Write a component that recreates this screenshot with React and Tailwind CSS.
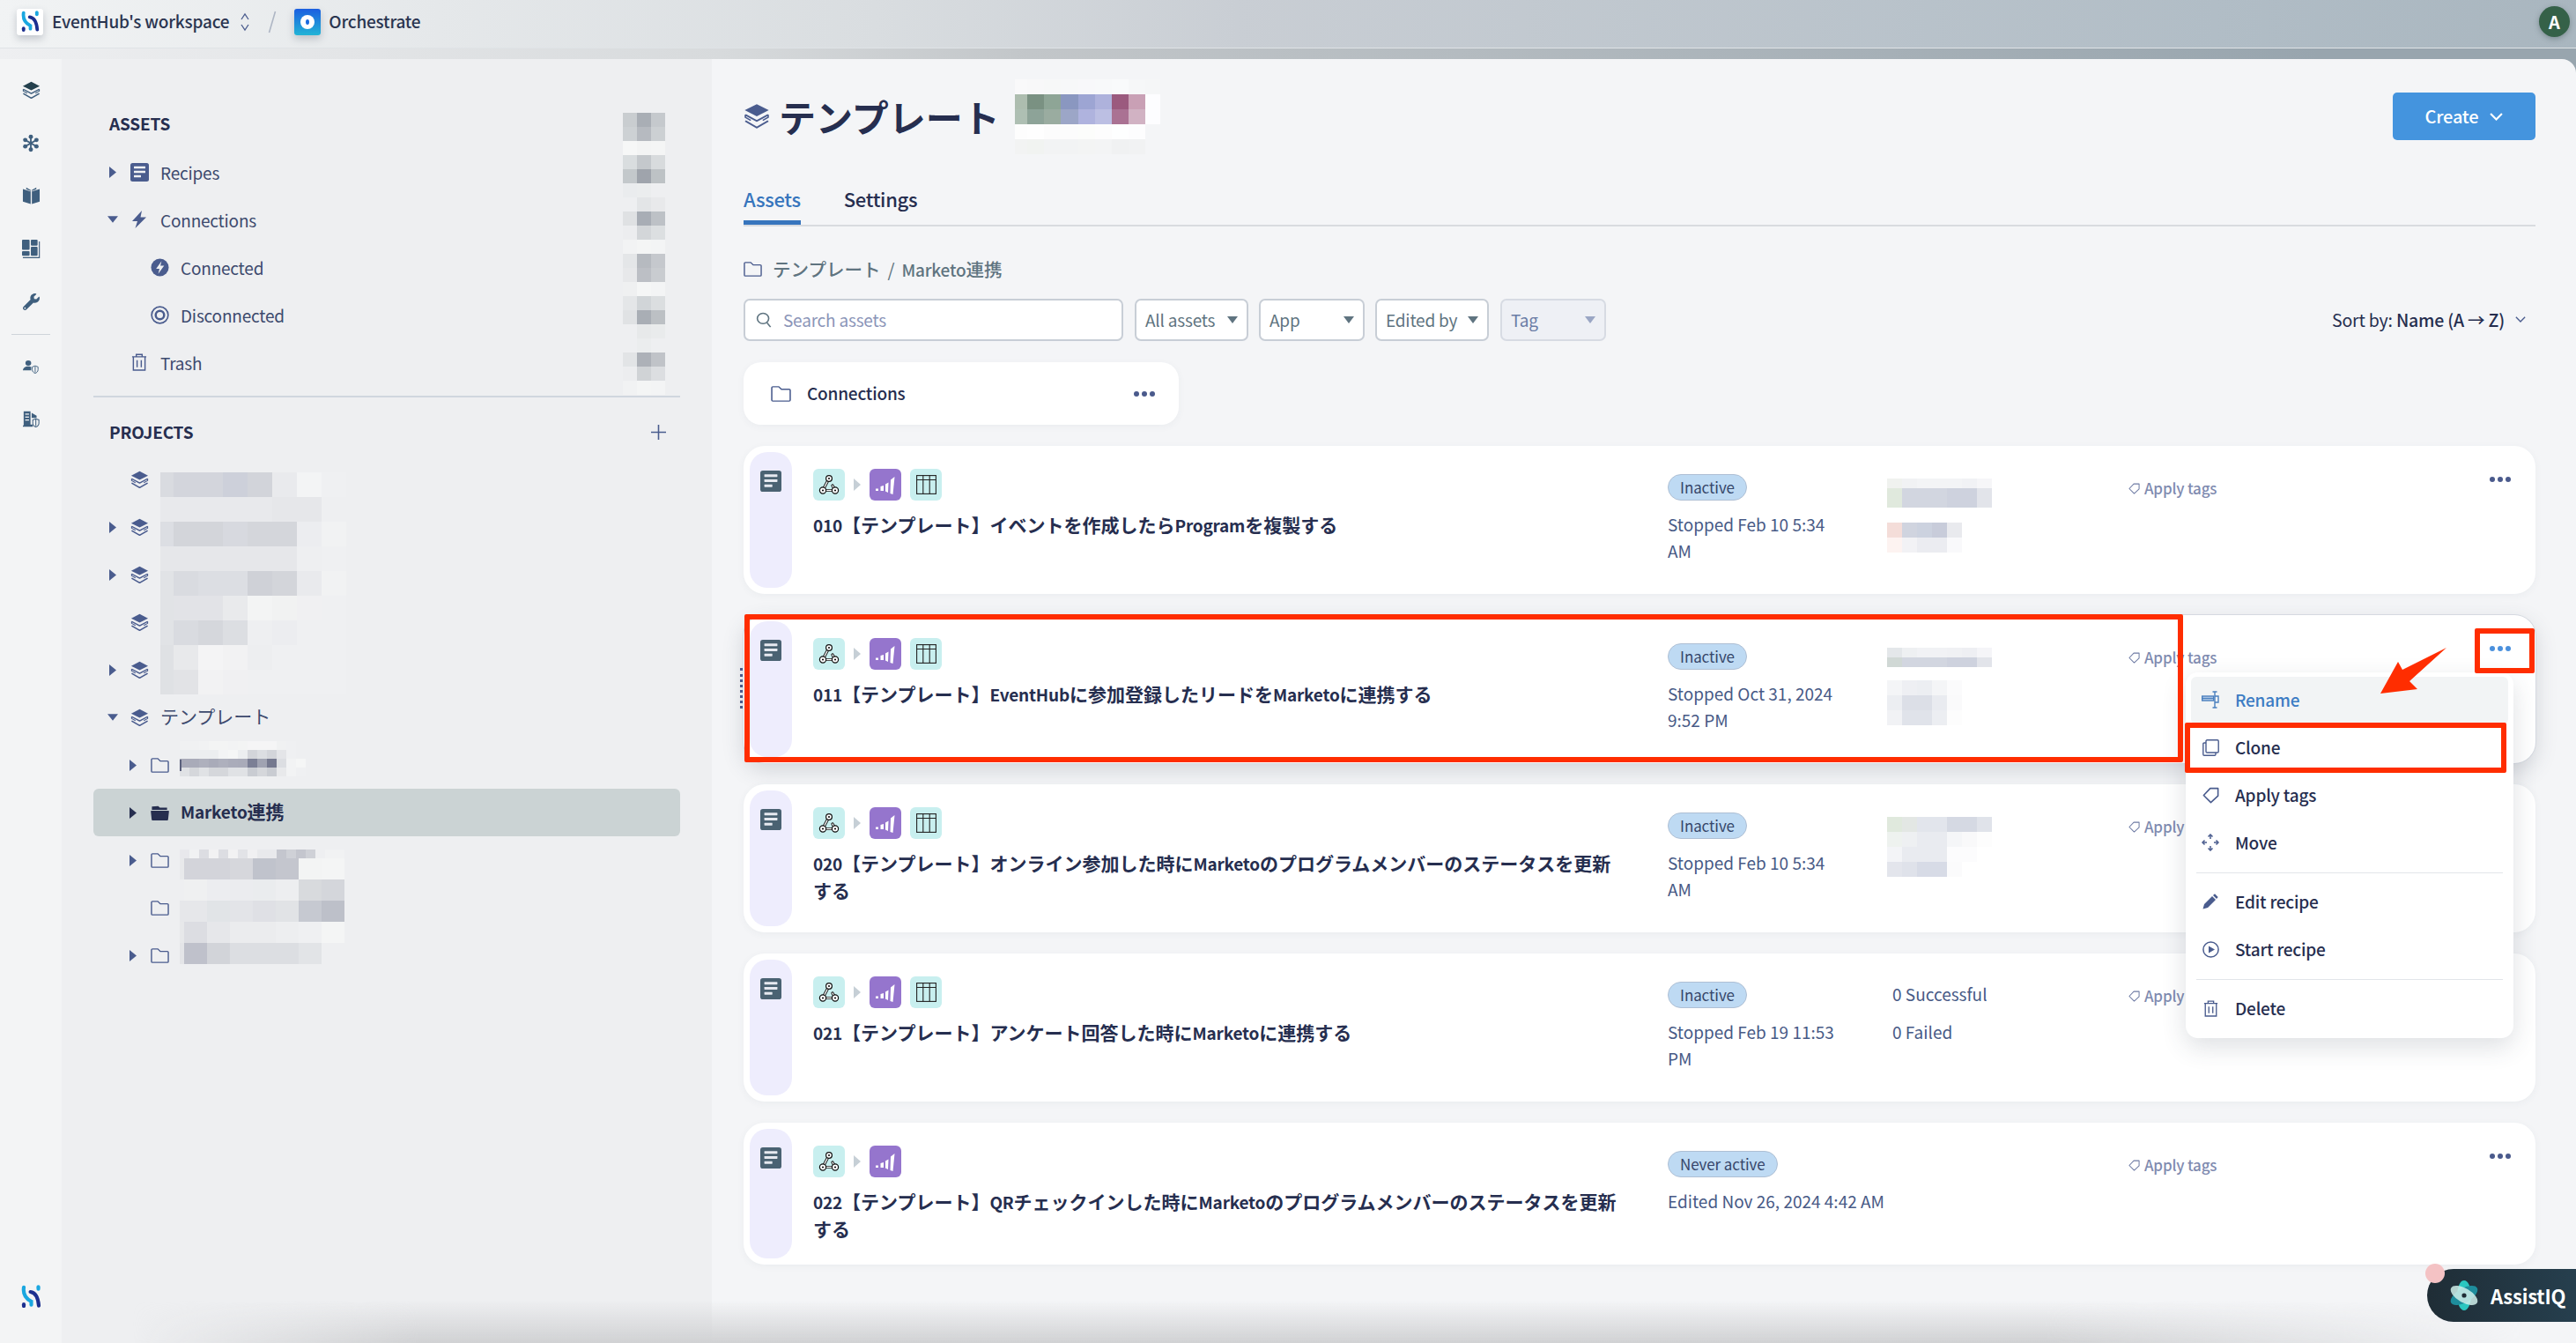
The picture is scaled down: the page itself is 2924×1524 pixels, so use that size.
import React from "react";
import { FaWrench } from "react-icons/fa";

const NAVY = "#4a5c8e";

function Mosaic({ rows, tw, th, xs, className }) {
  const cols = xs || Array.from({ length: Math.max(...rows.map((r) => r.length)) + 1 }, (_, i) => i * tw);
  const w = cols[cols.length - 1];
  const h = rows.length * th;
  return (
    <svg width={w} height={h} className={className} shapeRendering="crispEdges" aria-hidden="true">
      {rows.map((r, y) =>
        r.map((c, x) => (
          <rect key={x + "-" + y} x={cols[x]} y={y * th} width={cols[x + 1] - cols[x]} height={th} fill={c} />
        ))
      )}
    </svg>
  );
}

function Mixed({ text, latin = "text-[19px] tracking-[-0.2px]" }) {
  const parts = text.split(/([A-Za-z0-9]+|する$)/);
  return (
    <>
      {parts.map((p, i) =>
        /^[A-Za-z0-9]+$/.test(p) ? (
          <span key={i} className={latin}>{p}</span>
        ) : p === "する" ? (
          <span key={i}>{p}</span>
        ) : (
          <React.Fragment key={i}>{p}</React.Fragment>
        )
      )}
    </>
  );
}

function Stack({ size = 21, color = NAVY, topColor }) {
  return (
    <svg width={size} height={size} viewBox="0 0 22 26" preserveAspectRatio="none" fill="none">
      <path d="M11 1 21 7 11 13 1 7Z" fill={topColor || color} />
      <path d="M1.5 11.5 11 17.5 20.5 11.5" stroke={color} strokeWidth="1.6" strokeLinejoin="round" />
      <path d="M1.5 17.5 11 24 20.5 17.5" stroke={color} strokeWidth="1.6" strokeLinejoin="round" />
      <path d="M1.5 11.5V14L6 17M20.5 11.5V14L16 17" stroke={color} strokeWidth="1.2" />
    </svg>
  );
}
function Snow() {
  const c = "#3f5f7e";
  const pts = [[11, 3], [11, 19], [4, 7], [18, 7], [4, 15], [18, 15]];
  return (
    <svg width="20" height="21" viewBox="0 0 22 22">
      {pts.map((p, i) => (
        <g key={i}>
          <line x1="11" y1="11" x2={p[0]} y2={p[1]} stroke={c} strokeWidth="2" />
          <circle cx={p[0]} cy={p[1]} r="2.7" fill={c} />
        </g>
      ))}
      <circle cx="11" cy="11" r="2.2" fill={c} />
    </svg>
  );
}
function Book() {
  return (
    <svg width="21" height="20" viewBox="0 0 22 21" fill="#3f5f7e">
      <path d="M1 2.5 10.3 5.5V20.5L1 17.5Z" />
      <path d="M21 2.5 11.7 5.5V20.5L21 17.5Z" />
      <path d="M5 .8 10.5 4 10.5 5 5 2.8ZM17 .8 11.5 4V5L17 2.8Z" />
    </svg>
  );
}
function Dash() {
  return (
    <svg width="21" height="21" viewBox="0 0 22 22" fill="#3f5f7e">
      <rect x="0" y="0" width="9" height="12" rx="1" />
      <rect x="10.5" y="0" width="8" height="7" rx="1" />
      <rect x="10.5" y="8.5" width="8" height="10.5" rx="1" />
      <rect x="0" y="13.5" width="9" height="5.5" rx="1" />
      <path d="M20 2h1.2v20H1v-1.3h19Z" />
    </svg>
  );
}
function UserShield() {
  return (
    <svg width="18" height="16" viewBox="0 0 22 22" preserveAspectRatio="none" fill="none">
      <circle cx="7.5" cy="5.5" r="4" fill="#3f5f7e" />
      <path d="M0 17c0-4 3-6.5 7.5-6.5 2 0 3 .4 4 1V17Z" fill="#3f5f7e" />
      <path d="M13 11.5 17 9.8l4 1.7V16c0 2.8-2 4.6-4 5.4-2-.8-4-2.6-4-5.4Z" stroke="#3f5f7e" strokeWidth="1.2" />
      <path d="M17 11v9" stroke="#3f5f7e" strokeWidth="1.2" />
    </svg>
  );
}
function BuildingShield() {
  return (
    <svg width="19" height="20" viewBox="0 0 22 24" preserveAspectRatio="none" fill="none">
      <path d="M1 1h9v18h3v3H0v-2h1Z" fill="#3f5f7e" />
      <rect x="3" y="4" width="5" height="1.5" fill="#f3f4f5" />
      <rect x="3" y="8" width="5" height="1.5" fill="#f3f4f5" />
      <rect x="3" y="12" width="5" height="1.5" fill="#f3f4f5" />
      <path d="M11.5 3 18 7v3h-6.5Z" fill="#3f5f7e" />
      <path d="M13 12.5 17 11l4 1.5V17c0 2.7-2 4.4-4 5.2-2-.8-4-2.5-4-5.2Z" fill="#f3f4f5" stroke="#3f5f7e" strokeWidth="1.2" />
      <path d="M17 12v9" stroke="#3f5f7e" strokeWidth="1.2" />
    </svg>
  );
}
function SmallS({ w = 22 }) {
  return (
    <svg width={w} height={w * 1.15} viewBox="0 0 24 28" fill="none" strokeLinecap="round">
      <path d="M3 3C2 10 4 16 12 20V24" stroke="#1aa7e0" strokeWidth="4.4" />
      <path d="M20.5 2.5V5" stroke="#1aa7e0" strokeWidth="4.4" />
      <path d="M11 8.5C15 9 20 13 21 25" stroke="#1c2f8f" strokeWidth="4.4" />
      <path d="M3 23.5V25.5" stroke="#1c2f8f" strokeWidth="4.4" />
    </svg>
  );
}
function RecipeIcon({ color = NAVY, line = "#f0f1f4", s = 21 }) {
  return (
    <svg width={s} height={s} viewBox="0 0 21 21">
      <rect x="0" y="0" width="21" height="21" rx="2.5" fill={color} />
      <rect x="4" y="3.7" width="13" height="2.6" rx="0.4" fill={line} />
      <rect x="4" y="8.7" width="13" height="2.6" rx="0.4" fill={line} />
      <rect x="4" y="13.7" width="8" height="2.6" rx="0.4" fill={line} />
    </svg>
  );
}
function BoltIcon() {
  return (
    <svg width="16" height="22" viewBox="0 0 16 20" fill={NAVY}>
      <path d="M11 0 0 12h6L3.5 20 16 7.5H9.5Z" />
    </svg>
  );
}
function ConnectedIcon() {
  return (
    <svg width="21" height="21" viewBox="0 0 22 22">
      <circle cx="11" cy="11" r="10.5" fill={NAVY} />
      <path d="M13 3.5 6.5 12.5h4L9 18.5l7-9.5h-4.4Z" fill="#eeeff1" />
    </svg>
  );
}
function DisconnectedIcon() {
  return (
    <svg width="21" height="21" viewBox="0 0 22 22" fill="none" stroke={NAVY}>
      <circle cx="11" cy="11" r="9.8" strokeWidth="1.8" />
      <circle cx="11" cy="11" r="5" strokeWidth="2.6" />
    </svg>
  );
}
function TrashIcon({ color = NAVY, w = 18, h = 20 }) {
  return (
    <svg width={w} height={h} viewBox="0 0 19 21" fill="none" stroke={color} strokeWidth="1.5">
      <path d="M1 4h17M6 4V1.2h7V4M2.5 4v16h14V4M7 8v8.5M12 8v8.5" />
    </svg>
  );
}
function FolderIcon({ w = 21, h = 17, color = NAVY }) {
  return (
    <svg width={w} height={h} viewBox="0 0 22 20" preserveAspectRatio="none" fill="none" stroke={color} strokeWidth="1.5">
      <path d="M1 2.2c0-.7.5-1.2 1.2-1.2h6.3l3 3.2h8.3c.7 0 1.2.5 1.2 1.2v12.4c0 .7-.5 1.2-1.2 1.2H2.2c-.7 0-1.2-.5-1.2-1.2Z" />
    </svg>
  );
}
function OpenFolderIcon() {
  return (
    <svg width="21" height="17" viewBox="0 0 22 20" preserveAspectRatio="none" fill="#262e4f">
      <path d="M1.5 1.5 9 1l2 2h8.5v3H1.5Z" />
      <path d="M1 7h20c.5 0 .9.4.8 1l-1 10.5c0 .8-.6 1.5-1.4 1.5H2.6c-.8 0-1.4-.7-1.4-1.5L.2 8c-.1-.6.3-1 .8-1Z" />
    </svg>
  );
}
function Caret({ open, color = NAVY }) {
  return open ? (
    <svg width="13" height="8" viewBox="0 0 13 8"><path d="M0 0h13L6.5 8Z" fill={color} /></svg>
  ) : (
    <svg width="8" height="13" viewBox="0 0 8 13"><path d="M0 0 8 6.5 0 13Z" fill={color} /></svg>
  );
}
function DownTri({ color = "#5f7480" }) {
  return <svg width="12" height="8" viewBox="0 0 12 8" className="shrink-0"><path d="M0 0h12L6 8Z" fill={color} /></svg>;
}
function Chev({ color = "white", w = 14, sw = 2 }) {
  return (
    <svg width={w} height={w * 0.6} viewBox="0 0 14 8.4" fill="none" stroke={color} strokeWidth={sw}>
      <path d="M1 1 7 7 13 1" />
    </svg>
  );
}
function Dots({ color = "#4a5a8c" }) {
  return (
    <svg width="24" height="6" viewBox="0 0 24 6" fill={color}>
      <circle cx="3" cy="3" r="3" />
      <circle cx="12" cy="3" r="3" />
      <circle cx="21" cy="3" r="3" />
    </svg>
  );
}
function TagIcon({ s = 13, color = "#6d7aa3", sw = 1.1 }) {
  return (
    <svg width={s} height={s} viewBox="0 0 14 14" fill="none" stroke={color} strokeWidth={sw} strokeLinejoin="round">
      <path d="M1 7 6.5 1.2H13V7.5L7 13Z" />
    </svg>
  );
}
function WebhookTile() {
  return (
    <div className="w-[36px] h-[36px] rounded-[6px] bg-[#c8efef] flex items-center justify-center">
      <svg width="24" height="24" viewBox="0 0 24 24" fill="none">
        <g stroke="#111" strokeWidth="3.2" strokeLinecap="round">
          <path d="M12 5 7.5 13.5 5 18.5M5 18.5H19M19 18.5 16 13" />
        </g>
        <g stroke="#fff" strokeWidth="1.4" strokeLinecap="round">
          <path d="M12 5 7.5 13.5 5 18.5M5 18.5H19M19 18.5 16 13" />
        </g>
        <circle cx="12" cy="5" r="3.4" fill="#fff" stroke="#111" strokeWidth="1.2" />
        <circle cx="12" cy="5" r="1.1" fill="#111" />
        <circle cx="5" cy="18.5" r="3.6" fill="#fff" stroke="#111" strokeWidth="1.2" />
        <circle cx="5" cy="18.5" r="1.1" fill="#111" />
        <circle cx="19" cy="18.5" r="3.6" fill="#fff" stroke="#111" strokeWidth="1.2" />
        <circle cx="19" cy="18.5" r="1.1" fill="#111" />
      </svg>
    </div>
  );
}
function MarketoTile() {
  return (
    <div className="w-[36px] h-[36px] rounded-[6px] bg-[#9575cd] flex items-center justify-center">
      <svg width="24" height="24" viewBox="0 0 24 24" fill="#fff">
        <path d="M1 16.5h3V19H1Z" />
        <path d="M6.5 14 10 13v6H6.5Z" />
        <path d="M12 11.5 15.5 9.5 15 21 12 19.5Z" />
        <path d="M18 6.5 22.5 3 20.5 23 17.5 22Z" />
      </svg>
    </div>
  );
}
function TableTile() {
  return (
    <div className="w-[36px] h-[36px] rounded-[6px] bg-[#c8efef] flex items-center justify-center">
      <svg width="23" height="22" viewBox="0 0 23 22" fill="none" stroke="#222" strokeWidth="1.1">
        <rect x="0.6" y="0.6" width="21.8" height="20.8" />
        <path d="M0.6 5.5h21.8M7.8 0.6v20.8M15.2 0.6v20.8" />
      </svg>
    </div>
  );
}

function Row({ level = 1, caret, open, icon, selected, children, lift }) {
  return (
    <div
      className={
        "h-[54px] flex items-center rounded-[6px] " +
        (selected ? "bg-[#cbd3d4] " : "") +
        (level === 1 ? "pl-[16px]" : "pl-[39px]")
      }
    >
      <div className="w-[12px] flex justify-center shrink-0">{caret ? <Caret open={open} color={selected ? "#262e4f" : NAVY} /> : null}</div>
      <div className="w-[24px] ml-[12px] flex justify-center shrink-0">{icon}</div>
      <div className={"ml-[12px] leading-none " + (lift ? "pb-[4px] " : "") + (selected ? "font-bold text-[#262e4f] text-[21px]" : "text-[#3d4a6e] text-[21px]")}>{children}</div>
    </div>
  );
}

const sideMosaic = [
  ["#c9cdd0", "#a9aeb5", "#c5c9cd"],
  ["#cdd1d4", "#b6bac0", "#ccd0d3"],
  ["#f6f7f7", "#f3f4f4", "#f4f5f5"],
  ["#d9dddf", "#c4c8cc", "#d8dbdd"],
  ["#c3c8cb", "#9fa4ac", "#bdc2c5"],
  ["#eaecee", "#ebedee", "#eeeff1"],
  ["#eeeff1", "#e3e5e7", "#e8e9eb"],
  ["#dfe1e3", "#a8adb5", "#bdc1c6"],
  ["#ecedef", "#d3d6d9", "#dcdfe1"],
  ["#f2f3f4", "#f4f5f5", "#f3f4f5"],
  ["#e4e6e8", "#b6bac0", "#c5c8cd"],
  ["#e7e8ea", "#bcbfc5", "#c9ccd0"],
  ["#eff0f1", "#f5f6f6", "#f3f4f5"],
  ["#e4e6e8", "#d1d5d8", "#dbdee0"],
  ["#e0e2e4", "#a9aeb5", "#bcc0c4"],
  ["#eeeff1", "#e7e9ea", "#e9ebec"],
  ["#eeeff1", "#ebedee", "#eeeff1"],
  ["#e2e4e6", "#adb1b8", "#c0c3c8"],
  ["#ecedef", "#d0d3d6", "#dcdee1"],
  ["#f1f2f3", "#f4f5f5", "#f3f4f5"],
];
const projMosaic = [
  ["#d9dbe0", "#d3d5dc", "#d3d5dc", "#cdd0da", "#d2d4da", "#e9eaed", "#f3f4f5", "#eff0f2"],
  ["#e8e9ec", "#e8e9ec", "#e8e9ec", "#e8e9ec", "#e8e9ec", "#e6e7ea", "#e6e7ea", "#eeeff1"],
  ["#dcdee3", "#d3d5da", "#d3d5da", "#d7d9df", "#d4d6db", "#d4d6db", "#ecedf0", "#f1f2f3"],
  ["#e6e7ea", "#e6e7ea", "#e6e7ea", "#e6e7ea", "#e6e7ea", "#e6e7ea", "#eeeff1", "#eff0f2"],
  ["#e1e3e6", "#d9dbe0", "#dcdee3", "#dcdee3", "#cfd1d7", "#d3d5da", "#e9eaed", "#f1f2f3"],
  ["#e1e3e6", "#e2e3e7", "#e2e3e7", "#e9eaec", "#f3f4f4", "#f1f2f2", "#f0f0f2", "#eff0f2"],
  ["#e1e3e6", "#d9dbe0", "#d5d7dc", "#dcdee2", "#eeeff1", "#ecedf0", "#eff0f2", "#eff0f2"],
  ["#dfe1e4", "#e8e9eb", "#f4f4f5", "#f2f2f3", "#edeef0", "#eff0f2", "#eff0f2", "#eff0f2"],
  ["#dfe1e4", "#e2e3e6", "#f2f2f3", "#f0f0f2", "#eff0f2", "#eff0f2", "#eff0f2", "#eff0f2"],
];
const folderMosaic1 = [
  ["#f0f1f2", "#f0f1f2", "#f1f2f3", "#f3f4f4", "#f3f4f4", "#f2f3f4", "#f3f4f4", "#f5f5f6", "#f5f5f6", "#f5f5f6", "#f0f1f2", "#eff0f2", "#eeeff1", "#eeeff1"],
  ["#eceef0", "#eceef0", "#eceef0", "#eceef0", "#f3f4f5", "#f5f6f6", "#eceef0", "#d3d5da", "#dcdee2", "#d3d5da", "#e4e5e8", "#eff0f2", "#eeeff1", "#eeeff1"],
  ["#a9abb9", "#a9abb9", "#aeb0bd", "#a9abb9", "#aeb0bd", "#aaacba", "#a9abb9", "#7b7f95", "#a0a3b2", "#75798f", "#dcdee2", "#f2f3f4", "#f5f6f6", "#eeeff1"],
  ["#e0e2e5", "#d5d7db", "#e0e2e5", "#d5d7db", "#d5d7db", "#e0e2e5", "#e0e2e5", "#c9ccd2", "#d5d7db", "#c9ccd2", "#e8e9eb", "#f2f3f4", "#eff0f2", "#eeeff1"],
];
const folderMosaic2Top = [
  ["#e8e8ec", "#f1f2f3", "#dcdde2", "#f2f2f3", "#dcdde2", "#f2f2f3", "#e2e3e7", "#f0f0f2", "#e8e9ec", "#e8e9ec", "#c4c6ce", "#cfd1d7", "#c4c6ce", "#cfd1d7", "#eeeff1", "#f1f2f3", "#f1f2f3"],
];
const folderMosaic2 = [
  ["#e8e9eb", "#d3d4da", "#d3d4da", "#d6d7dc", "#c0c3cc", "#c4c6ce", "#f3f4f4", "#f4f5f5"],
  ["#eeeff1", "#eff0f1", "#ecedf0", "#ebecef", "#eaecee", "#edeef0", "#d8dadd", "#d4d6db"],
  ["#e6e7ea", "#e6e7ea", "#e1e4e7", "#e3e4e8", "#dfe0e5", "#e1e3e6", "#c6c9d1", "#bdc0c9"],
  ["#e7e8ea", "#dcdde2", "#e6e7ea", "#ebecee", "#ebecee", "#edeef0", "#eff0f2", "#f4f5f5"],
  ["#e4e5e8", "#bfc1cb", "#d2d4d9", "#dcdee2", "#dcdee2", "#dcdee2", "#e2e4e7", "#eeeff1"],
];
const titleMosaic = [
  ["#f9f9fa", "#f8f8f9", "#f7f8f8", "#f7f8f9", "#f8f8fa", "#f8f9fa", "#f9fafb", "#f6f7f8", "#f5f6f7"],
  ["#adbdaf", "#7a9182", "#8ea596", "#8a97c0", "#9da5d3", "#aeb2dc", "#9b5a7e", "#c9a0b5", "#fdfdff"],
  ["#aebfb3", "#8da398", "#9aaca0", "#9ca6c7", "#afb3de", "#bcbfe3", "#aa7293", "#d1b2c3", "#fdfdff"],
  ["#fdfdfd", "#fefefe", "#fcfcfc", "#fcfcfc", "#fcfdfb", "#fdfdfd", "#feffff", "#fdfdfe", "#f4f5f7"],
  ["#f2f3f3", "#f1f3f1", "#f2f3f4", "#f2f3f4", "#f3f4f4", "#f3f4f5", "#f0f1f2", "#f1f2f3", "#f4f5f7"],
];

const L = "text-[19px] tracking-[-0.2px]";

function Sidebar() {
  return (
    <aside className="relative w-[738px] shrink-0 bg-[#eeeff1] px-[36px] pt-[46px]">
      <div className="h-[55px] flex items-center pl-[18px] text-[19px] tracking-[-0.2px] font-bold text-[#262e4f]">ASSETS</div>
      <Row caret icon={<RecipeIcon s={21} />}><span className={L}>Recipes</span></Row>
      <Row caret open icon={<BoltIcon />}><span className={L}>Connections</span></Row>
      <Row level={2} icon={<ConnectedIcon />}><span className={L}>Connected</span></Row>
      <Row level={2} icon={<DisconnectedIcon />}><span className={L}>Disconnected</span></Row>
      <Row icon={<TrashIcon />}><span className={L}>Trash</span></Row>
      <div className="mt-[11px] h-[2px] bg-[#d0d6de]" />
      <div className="mt-[12px] h-[54px] flex items-center justify-between pl-[18px] pr-[16px]">
        <span className="text-[19px] tracking-[-0.2px] font-bold text-[#262e4f]">PROJECTS</span>
        <svg width="17" height="17" viewBox="0 0 17 17" stroke={NAVY} strokeWidth="1.6"><path d="M8.5 0v17M0 8.5h17" /></svg>
      </div>
      <Row icon={<Stack />}>{"\u00A0"}</Row>
      <Row caret icon={<Stack />}>{"\u00A0"}</Row>
      <Row caret icon={<Stack />}>{"\u00A0"}</Row>
      <Row icon={<Stack />}>{"\u00A0"}</Row>
      <Row caret icon={<Stack />}>{"\u00A0"}</Row>
      <Row caret open lift icon={<Stack />}>テンプレート</Row>
      <Row level={2} caret icon={<FolderIcon />}>{"\u00A0"}</Row>
      <Row level={2} caret selected lift icon={<OpenFolderIcon />}><Mixed text="Marketo連携" /></Row>
      <Row level={2} caret icon={<FolderIcon />}>{"\u00A0"}</Row>
      <Row level={2} icon={<FolderIcon />}>{"\u00A0"}</Row>
      <Row level={2} caret icon={<FolderIcon />}>{"\u00A0"}</Row>

      <Mosaic rows={sideMosaic} tw={16} th={16} className="absolute left-[637px] top-[61px]" />
      <Mosaic rows={projMosaic} th={28} xs={[0, 15, 43, 71, 99, 127, 155, 183, 211]} className="absolute left-[112px] top-[469px]" />
      <Mosaic rows={folderMosaic1} tw={11} th={10} className="absolute left-[134px] top-[774px]" />
      <div className="absolute left-[134px] top-[795px] w-[2px] h-[13px] bg-[#5a607c]" />
      <Mosaic rows={folderMosaic2Top} tw={11} th={10} className="absolute left-[134px] top-[897px]" />
      <Mosaic rows={folderMosaic2} th={24} xs={[0, 5, 31, 57, 83, 109, 135, 161, 187]} className="absolute left-[134px] top-[907px]" />
    </aside>
  );
}

function Select({ label, w, disabled }) {
  return (
    <div
      className={
        "h-[48px] shrink-0 rounded-[7px] border-2 flex items-center justify-between pl-[10px] pr-[10px] text-[19px] tracking-[-0.2px] " +
        w + " " +
        (disabled ? "bg-[#eef0f5] border-[#d7dbe3] text-[#6a7ca5]" : "bg-white border-[#c8ced6] text-[#5f7480]")
      }
    >
      <span>{label}</span>
      <DownTri color={disabled ? "#9aa6c4" : "#5f7480"} />
    </div>
  );
}

const card = [
  {
    t: "010【テンプレート】イベントを作成したらProgramを複製する",
    s: "Inactive",
    d: ["Stopped Feb 10 5:34", "AM"],
    apps: 3,
    blur: (
      <div className="flex flex-col gap-[17px]">
        <Mosaic tw={17} th={11} rows={[
          ["#f0f2ef", "#f1f2f4", "#f3f4f6", "#f3f4f6", "#f3f4f6", "#f1f2f5", "#f6f6f8"],
          ["#e0e9dd", "#d2d6e0", "#d2d6e0", "#d2d6e0", "#ced2de", "#ced2de", "#e2e4ea"],
          ["#e0e9dd", "#d2d6e0", "#d2d6e0", "#d2d6e0", "#ced2de", "#ced2de", "#e2e4ea"],
        ]} />
        <Mosaic tw={17} th={17} rows={[
          ["#f4ddd9", "#d0d4df", "#ccd2df", "#c8ccda", "#e9eaee"],
          ["#fdf3f1", "#f2f2f5", "#ebecf1", "#ebecf1", "#f9f9fb"],
        ]} />
      </div>
    ),
  },
  {
    t: "011【テンプレート】EventHubに参加登録したリードをMarketoに連携する",
    s: "Inactive",
    d: ["Stopped Oct 31, 2024", "9:52 PM"],
    apps: 3,
    active: true,
    blur: (
      <div className="flex flex-col gap-[15px]">
        <Mosaic tw={17} th={11} rows={[
          ["#e4e7ea", "#eef0f2", "#f1f2f5", "#f1f2f5", "#f0f1f4", "#eeeff3", "#f5f5f8"],
          ["#d0d8d5", "#d2d6e0", "#d2d6e0", "#d2d6e0", "#ced2de", "#ced2de", "#e2e4ea"],
        ]} />
        <Mosaic tw={17} th={17} rows={[
          ["#f4f5f7", "#eeeff3", "#eceef2", "#f4f5f7", "#fbfbfc"],
          ["#eceef2", "#dcdfe7", "#dcdfe7", "#e9ebf0", "#fafafb"],
          ["#f1f2f5", "#e0e3ea", "#e0e3ea", "#eceef2", "#fdfdfd"],
        ]} />
      </div>
    ),
  },
  {
    t: "020【テンプレート】オンライン参加した時にMarketoのプログラムメンバーのステータスを更新する",
    s: "Inactive",
    d: ["Stopped Feb 10 5:34", "AM"],
    apps: 3,
    blur: (
      <Mosaic tw={17} th={17} rows={[
        ["#e0e9dd", "#e3e7e4", "#e2e5ec", "#e2e5ec", "#d5d9e3", "#d5d9e3", "#e0e3ea"],
        ["#eef2ef", "#eef0f2", "#e9ebf0", "#e9ebf0", "#f5f6f8", "#f9f9fa", "#fdfdfd"],
        ["#f3f4f7", "#e9ebf0", "#e9ebf0", "#e9ebf0", "#fcfcfd", "#fcfcfd", "#ffffff"],
        ["#e3e5ec", "#dfe2ea", "#d7dbe6", "#d7dbe6", "#fbfbfc", "#ffffff", "#ffffff"],
      ]} />
    ),
  },
  {
    t: "021【テンプレート】アンケート回答した時にMarketoに連携する",
    s: "Inactive",
    d: ["Stopped Feb 19 11:53", "PM"],
    apps: 3,
    stats: true,
  },
  {
    t: "022【テンプレート】QRチェックインした時にMarketoのプログラムメンバーのステータスを更新する",
    s: "Never active",
    d: ["Edited Nov 26, 2024 4:42 AM"],
    apps: 2,
    last: true,
  },
];

function RecipeCard({ c }) {
  return (
    <div
      className={
        "flex rounded-[24px] bg-white p-[7px] " +
        (c.last ? "h-[161px] " : "h-[168px] ") +
        (c.active
          ? "shadow-[0_0_0_1px_#d5d9e0,0_8px_24px_rgba(60,70,90,0.18)] "
          : "shadow-[0_2px_8px_rgba(60,70,90,0.05)] ")
      }
    >
      <div className="w-[48px] shrink-0 rounded-[20px] bg-[#eeedfd] flex justify-center pt-[21px]">
        <div className="h-fit">
          <RecipeIcon color="#4a6272" line="#e6e9f0" s={24} />
        </div>
      </div>
      <div className="w-[994px] shrink-0 pl-[24px] pr-[56px] pt-[19px]">
        <div className="flex items-center h-[36px]">
          <WebhookTile />
          <svg width="8" height="14" viewBox="0 0 8 14" className="mx-[10px]"><path d="M0 0 8 7 0 14Z" fill="#c6cfd6" /></svg>
          <MarketoTile />
          {c.apps === 3 ? <div className="ml-[10px]"><TableTile /></div> : null}
        </div>
        <div className="mt-[12px] text-[21px] leading-[31px] font-bold text-[#262e4f]"><Mixed text={c.t} /></div>
      </div>
      <div className="w-[249px] shrink-0 pt-[25px]">
        <div className="h-[30px] w-fit rounded-full bg-[#bedaf3] border border-[#aebfd4] px-[13px] flex items-center text-[17px] tracking-[-0.1px] text-[#36466a]">{c.s}</div>
        <div className="mt-[12px] text-[19px] leading-[30px] whitespace-nowrap text-[#485a86]">
          {c.d.map((l) => <div key={l}>{l}</div>)}
        </div>
      </div>
      <div className="w-[274px] shrink-0 pt-[30px]">
        {c.blur ? c.blur : null}
        {c.stats ? (
          <div className="pl-[6px] text-[19px] text-[#485a86] leading-[30px]">
            <div className="mt-[-6px]">0 Successful</div>
            <div className="mt-[13px]">0 Failed</div>
          </div>
        ) : null}
      </div>
      <div className="flex-1 pt-[26px]">
        <div className="flex items-center gap-[5px] h-[30px] text-[17px] tracking-[-0.2px] font-medium text-[#7f8bb0]">
          <TagIcon />
          <span>Apply tags</span>
        </div>
      </div>
      <div className="pt-[28px] pr-[21px]">
        <Dots color={c.active ? "#4a90dd" : "#4a5a8c"} />
      </div>
    </div>
  );
}

function MenuItem({ icon, children, active }) {
  return (
    <div className={"h-[54px] flex items-center rounded-[6px] " + (active ? "bg-[#f2f4f5] text-[#3c7cc4]" : "text-[#262e4f]")}>
      <div className="w-[44px] flex justify-center shrink-0 pb-[2px]">{icon}</div>
      <span className="ml-[6px] pb-[3px] text-[19px] tracking-[-0.2px] font-medium leading-none">{children}</span>
    </div>
  );
}

function Menu() {
  return (
    <div className="absolute left-[2481px] top-[763px] w-[372px] rounded-[14px] bg-white px-[6px] pt-[5px] pb-[6px] shadow-[0_10px_28px_rgba(50,60,80,0.16)]">
      <MenuItem active icon={
        <svg width="20" height="20" viewBox="0 0 20 20" fill="none" stroke="#4a7fbe" strokeWidth="1.4">
          <rect x="0.7" y="6" width="13" height="5" fill="#c7d8ee" />
          <path d="M0.7 8.5h13M15 1v18M12.5 1h5M12.5 19h5M15 6h4v7h-4" />
        </svg>
      }>Rename</MenuItem>
      <MenuItem icon={
        <svg width="19" height="19" viewBox="0 0 19 19" fill="none" stroke={NAVY} strokeWidth="1.4">
          <rect x="4" y="0.8" width="14.2" height="14.2" rx="1.2" />
          <path d="M4 4H2a1.2 1.2 0 0 0-1.2 1.2V17A1.2 1.2 0 0 0 2 18.2h12A1.2 1.2 0 0 0 15 17v-2" />
        </svg>
      }>Clone</MenuItem>
      <MenuItem icon={<TagIcon s={19} color={NAVY} sw={1.2} />}>Apply tags</MenuItem>
      <MenuItem icon={
        <svg width="20" height="20" viewBox="0 0 20 20" fill="none" stroke={NAVY} strokeWidth="1.5">
          <path d="M10 1v5M10 14v5M1 10h5M14 10h5" />
          <path d="M7.5 3.5 10 1l2.5 2.5M7.5 16.5 10 19l2.5-2.5M3.5 7.5 1 10l2.5 2.5M16.5 7.5 19 10l-2.5 2.5" />
        </svg>
      }>Move</MenuItem>
      <div className="mx-[6px] my-[6px] h-[1px] bg-[#e2e5ea]" />
      <MenuItem icon={
        <svg width="18" height="18" viewBox="0 0 18 18" fill={NAVY}>
          <path d="M0.5 17.5 2 12l9-9 4 4-9 9ZM12 2l2-1.7 3.7 3.7L16 6Z" />
        </svg>
      }>Edit recipe</MenuItem>
      <MenuItem icon={
        <svg width="19" height="19" viewBox="0 0 19 19" fill="none">
          <circle cx="9.5" cy="9.5" r="8.6" stroke={NAVY} strokeWidth="1.5" />
          <path d="M7 5.5 14 9.5 7 13.5Z" fill={NAVY} />
        </svg>
      }>Start recipe</MenuItem>
      <div className="mx-[6px] my-[6px] h-[1px] bg-[#e2e5ea]" />
      <MenuItem icon={<TrashIcon w={17} h={19} />}>Delete</MenuItem>
    </div>
  );
}

function Main() {
  return (
    <main className="relative flex-1 min-w-0 rounded-tr-[16px] bg-[#f4f5f7] pl-[36px] pr-[46px] pt-[38px]">
      <div className="h-[54px] flex items-center justify-between">
        <div className="flex items-center">
          <Stack size={30} />
          <h1 className="ml-[10px] text-[42px] font-bold leading-none text-[#262e4f]">テンプレート</h1>
          <Mosaic rows={titleMosaic} th={17} xs={[0, 14, 33, 52, 72, 91, 110, 129, 148, 165]} className="ml-[17px] -my-[20px]" />
        </div>
        <button className="w-[162px] h-[54px] rounded-[5px] bg-[#4494de] flex items-center justify-center gap-[13px] text-[20px] tracking-[-0.2px] font-medium text-white">
          Create <Chev color="white" w={15} />
        </button>
      </div>
      <div className="mt-[42px] h-[56px] border-b-2 border-[#d8dbdf] flex gap-[49px]">
        <div className="h-[54px] border-b-[5px] border-[#3775bd] flex items-center text-[22px] tracking-[-0.3px] font-medium text-[#3775bd]">Assets</div>
        <div className="h-[54px] pb-[5px] flex items-center text-[22px] tracking-[-0.3px] font-medium text-[#262e4f]">Settings</div>
      </div>
      <div className="mt-[33px] h-[30px] flex items-center text-[20.5px] font-medium text-[#5f7480]">
        <FolderIcon w={21} h={17} color="#4a5c8e" />
        <span className="ml-[12px]">テンプレート</span>
        <span className="ml-[8px] font-normal">/</span>
        <span className="ml-[8px]"><Mixed text="Marketo連携" /></span>
      </div>
      <div className="mt-[19px] flex items-center">
        <div className="w-[431px] h-[48px] rounded-[7px] border-2 border-[#c8ced6] bg-white flex items-center pl-[12px] text-[19px] tracking-[-0.2px] text-[#8b95b8]">
          <svg width="18" height="18" viewBox="0 0 20 22" preserveAspectRatio="none" fill="none" stroke="#5f7480" strokeWidth="1.8"><circle cx="9" cy="9" r="7.2" /><path d="m14 15 4.5 6" /></svg>
          <span className="ml-[13px]">Search assets</span>
        </div>
        <div className="ml-[13px]"><Select label="All assets" w="w-[129px]" /></div>
        <div className="ml-[12px]"><Select label="App" w="w-[120px]" /></div>
        <div className="ml-[12px]"><Select label="Edited by" w="w-[129px]" /></div>
        <div className="ml-[13px]"><Select label="Tag" w="w-[120px]" disabled /></div>
        <div className="ml-auto pr-[11px] flex items-center gap-[12px] text-[19.5px] tracking-[-0.2px] text-[#262e4f]">
          <span>Sort by: <span className="font-medium">Name (A → Z)</span></span>
          <Chev color={NAVY} w={12} sw={1.6} />
        </div>
      </div>
      <div className="mt-[24px] w-[494px] h-[71px] rounded-[20px] bg-white flex items-center justify-between pl-[31px] pr-[27px] shadow-[0_2px_8px_rgba(60,70,90,0.05)]">
        <div className="flex items-center gap-[18px]">
          <FolderIcon w={23} h={18} />
          <span className="text-[19px] tracking-[-0.2px] font-medium text-[#262e4f]">Connections</span>
        </div>
        <Dots />
      </div>
      <div className="mt-[24px] flex flex-col gap-[24px]">
        {card.map((c) => <RecipeCard key={c.t} c={c} />)}
      </div>
    </main>
  );
}

export default function App() {
  return (
    <div className="relative w-[2924px] h-[1524px] overflow-hidden flex flex-col bg-[linear-gradient(to_right,#eeeff1,#d7dadc_28%,#c2c6c9_40%,#98a5ae_90%,#98a5ae)] font-['Noto_Sans_CJK_JP','Noto_Sans',sans-serif]">
      <header className="h-[55px] shrink-0 flex items-center pl-[19px] pr-[7px] pb-[5px] bg-[linear-gradient(to_right,#f1f3f4,#d9dde0_34%,#c9ced4_48%,#b1bdc6_86%,#a9b6bf)] border-b border-[#dfe3e6]">
        <div className="w-[30px] h-[30px] bg-white rounded-[3px] flex items-center justify-center shadow-[0_4px_8px_rgba(60,70,90,0.25)]"><SmallS w={21} /></div>
        <span className="ml-[10px] text-[19px] tracking-[-0.2px] font-medium text-[#2a3550]">EventHub's workspace</span>
        <svg width="10" height="22" viewBox="0 0 10 22" fill="none" stroke={NAVY} strokeWidth="1.3" className="ml-[13px]"><path d="M1 8 5 2l4 6M1 14l4 6 4-6" /></svg>
        <svg width="10" height="26" viewBox="0 0 10 26" fill="none" stroke="#aeb6c4" strokeWidth="1.6" className="ml-[21px]"><path d="M8.5 1 1.5 25" /></svg>
        <div className="ml-[20px] w-[30px] h-[30px] rounded-[3px] bg-[linear-gradient(to_bottom,#1b5ee0,#22b4d6)] flex items-center justify-center shadow-[0_4px_8px_rgba(60,70,90,0.25)]">
          <svg width="18" height="18" viewBox="0 0 18 18"><circle cx="9" cy="9" r="8" fill="white" /><ellipse cx="9" cy="9" rx="2" ry="3" fill="#1b6ae0" /></svg>
        </div>
        <span className="ml-[9px] text-[19px] tracking-[-0.2px] font-medium text-[#2a3550]">Orchestrate</span>
        <div className="ml-auto w-[35px] h-[35px] rounded-full bg-[#356148] flex items-center justify-center text-[20px] font-bold text-white shadow-[0_2px_6px_rgba(40,60,60,0.35)]">A</div>
      </header>
      <div className="mt-[12px] flex flex-1 min-h-0">
        <nav className="w-[70px] shrink-0 bg-[#f3f4f5] flex flex-col items-center pt-[5px]">
          <div className="h-[60px] flex items-center"><Stack size={21} color="#3f5f7e" topColor="#24404d" /></div>
          <div className="h-[60px] flex items-center"><Snow /></div>
          <div className="h-[60px] flex items-center"><Book /></div>
          <div className="h-[60px] flex items-center"><Dash /></div>
          <div className="h-[60px] flex items-center text-[#3f5f7e]"><FaWrench size={19} /></div>
          <div className="mt-[7px] mb-[6px] w-[44px] h-[1px] bg-[#cfd4da]" />
          <div className="h-[60px] flex items-center"><UserShield /></div>
          <div className="h-[60px] flex items-center"><BuildingShield /></div>
          <div className="mt-auto mb-[40px]"><SmallS w={23} /></div>
        </nav>
        <Sidebar />
        <Main />
      </div>

      {/* annotation overlays */}
      <div className="absolute left-[150px] right-[60px] bottom-0 h-[48px] bg-[linear-gradient(to_top,#d0d1d3,#d0d1d300)] [mask-image:linear-gradient(to_right,transparent,black_12%,black_80%,transparent)] pointer-events-none" />
      <div className="absolute left-[840px] top-[758px] w-[3px] h-[46px] border-l-[3px] border-dotted border-[#4a5a8c]" />
      <Menu />
      <div className="absolute left-[845px] top-[697px] w-[1633px] h-[168px] border-[6px] border-[#ff2d00] rounded-[2px] pointer-events-none" />
      <div className="absolute left-[2809px] top-[713px] w-[68px] h-[51px] border-[6px] border-[#ff2d00] rounded-[2px]" />
      <div className="absolute left-[2480px] top-[820px] w-[365px] h-[57px] border-[6px] border-[#ff2d00] rounded-[2px]" />
      <svg className="absolute left-[2695px] top-[728px]" width="90" height="66" viewBox="2695 728 90 66">
        <path d="M2702 787 2722 751 2727 760 2777 735 2735 773 2744 782Z" fill="#ff2d00" />
      </svg>
      <div className="absolute left-[2755px] top-[1440px] w-[169px] h-[60px] rounded-l-[30px] bg-[linear-gradient(to_right,#1f2d36,#263f4e)] flex items-center pl-[25px]">
        <svg width="34" height="36" viewBox="0 0 34 36" className="shrink-0">
          <ellipse cx="17" cy="18" rx="8" ry="17" fill="#2bc7c0" />
          <ellipse cx="17" cy="18" rx="8" ry="17" fill="#1e8d9c" transform="rotate(60 17 18)" />
          <ellipse cx="17" cy="18" rx="8" ry="17" fill="#cfeeea" opacity="0.85" transform="rotate(-60 17 18)" />
          <circle cx="17" cy="18" r="2.6" fill="#1f2d36" />
        </svg>
        <span className="ml-[13px] text-[22px] tracking-[-0.2px] font-bold text-white leading-none">AssistIQ</span>
      </div>
      <div className="absolute left-[2753px] top-[1434px] w-[22px] h-[22px] rounded-full bg-[#f4c2c4]" />
    </div>
  );
}
